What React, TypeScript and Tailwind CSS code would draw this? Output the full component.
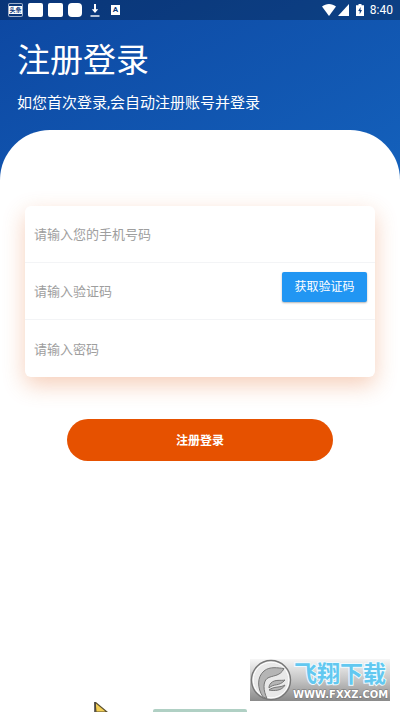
import type { ReactNode } from "react";

type FieldProps = {
  id: string;
  label: string;
  type?: string;
  children?: ReactNode;
};

function Field({ id, label, type = "text", children }: FieldProps) {
  return (
    <div className="flex h-[57px] items-start">
      <input
        id={id}
        type={type}
        aria-label={label}
        placeholder={label}
        className="h-full min-w-0 flex-1 bg-transparent px-[9px] pt-px text-[13px] text-gray-800 outline-none placeholder:text-[#9e9e9e]"
      />
      {children}
    </div>
  );
}

function StatusBar() {
  return (
    <div className="flex h-5 items-center justify-between bg-black/25 pr-[7px] pl-2 text-white">
      <div className="flex items-center gap-[5px]">
        <span className="flex h-[14px] w-[15px] items-center justify-center rounded-xs border border-white/60 bg-[#0a3678]">
          <span className="w-full bg-white text-center text-[6px] leading-[8px] font-bold whitespace-nowrap text-[#0a3678]">
            头条
          </span>
        </span>
        <span className="h-[14px] w-[15px] rounded-xs bg-white" />
        <span className="h-[14px] w-[15px] rounded-xs bg-white" />
        <span className="h-[14px] w-[14px] rounded-sm bg-white" />
        <svg viewBox="0 0 10 13" className="ml-[3px] h-[13px] w-[10px]" fill="none" stroke="currentColor">
          <path d="M5 0v8" strokeWidth="2" />
          <path d="M1.8 5.2h6.4L5 9z" fill="currentColor" stroke="none" />
          <path d="M0.5 12h9" strokeWidth="1.4" />
        </svg>
        <span className="ml-[6px] flex h-[10px] w-[9px] items-center justify-center bg-white text-[8px] leading-[10px] font-bold text-[#0a3678]">
          A
        </span>
      </div>
      <div className="flex items-center">
        <svg viewBox="0 0 14 12" className="h-3 w-[14px]" fill="currentColor">
          <path d="M0 2.6C4-.8 10-.8 14 2.6L7 12z" />
        </svg>
        <svg viewBox="0 0 11 12" className="ml-[2px] h-3 w-[11px]" fill="currentColor">
          <path d="M11 0v12H0z" />
        </svg>
        <svg viewBox="0 0 8 12" className="ml-[7px] h-3 w-2">
          <path d="M2.5 0h3v1.2H8V12H0V1.2h2.5z" fill="currentColor" />
          <path d="M4.6 3 2.2 7h1.5v3.2L6 6H4.5z" fill="#0b3a80" />
        </svg>
        <span className="ml-[6px] text-[12px] leading-5">8:40</span>
      </div>
    </div>
  );
}

function Watermark() {
  return (
    <div className="absolute right-[10px] bottom-[11px] flex h-[42px] w-[140px] items-center bg-linear-to-b from-[#f6f6f6] via-[#c4c4c4] to-[#8a8a8a]">
      <svg viewBox="0 0 42 42" className="h-[42px] w-[42px] shrink-0">
        <circle cx="21" cy="21" r="19.5" fill="#e9e9e9" stroke="#777" strokeWidth="1.4" />
        <circle cx="21" cy="21" r="17.8" fill="none" stroke="#fff" strokeWidth="1" />
        <path
          d="M34 9.5C28 9 20 7 14 12 7 18 7 29 13 38l4 1.500C13 31 13 23 17 19.500 22 16 30 18 34 9.500z"
          fill="#b5b5b5"
          stroke="#777"
          strokeWidth="1"
        />
        <path
          d="M35 21c-4 1-10-1-14 3-2 2-2 4-2 5 5-5 10-1 16-8z M35 26c-5 3-11 1-16 5 5 1 13 1 16-5z"
          fill="#b5b5b5"
          stroke="#777"
          strokeWidth="1"
        />
      </svg>
      <div className="flex flex-col pt-px whitespace-nowrap">
        <span className="pl-[2px] text-[23px] leading-[27px] font-bold text-[#62c8f0] [paint-order:stroke_fill] [-webkit-text-stroke:2px_#eefaff]">
          飞翔下载
        </span>
        <span className="pl-px font-['DejaVu_Sans'] text-[10px] leading-[13px] font-bold text-white [paint-order:stroke_fill] [-webkit-text-stroke:1px_#777]">
          WWW.FXXZ.COM
        </span>
      </div>
    </div>
  );
}

export default function App() {
  return (
    <div className="relative flex min-h-screen flex-col overflow-hidden bg-[linear-gradient(151deg,#0d47a1,#1565c0,#42a5f5)] font-[Roboto,'Noto_Sans_CJK_SC',sans-serif]">
      <StatusBar />
      <header className="px-[17px] pt-[17px] pb-[15px] text-white">
        <h1 className="text-[33px] leading-[48px]">注册登录</h1>
        <p className="mt-[7px] text-[15px] leading-[23px]">
          如您首次登录,会自动注册账号并登录
        </p>
      </header>
      <main className="flex-1 rounded-t-[50px] bg-white px-[25px] pt-[76px]">
        <form onSubmit={(e) => e.preventDefault()}>
          <div className="divide-y divide-gray-100 rounded-md bg-white shadow-[0_8px_22px_rgba(225,95,27,0.3)]">
            <Field id="phone" label="请输入您的手机号码" type="tel" />
            <Field id="code" label="请输入验证码">
              <button
                type="button"
                className="mt-[9px] mr-2 h-[30px] w-[85px] rounded-xs bg-[#2196f3] text-[12px] text-white shadow-[0_1px_2px_rgba(0,0,0,0.3)]"
              >
                获取验证码
              </button>
            </Field>
            <Field id="password" label="请输入密码" type="password" />
          </div>
          <div className="mt-[42px] px-[42px]">
            <button
              type="submit"
              className="h-[42px] w-full rounded-full bg-[#e65100] pt-px text-[12px] font-bold text-white"
            >
              注册登录
            </button>
          </div>
        </form>
      </main>

      <svg viewBox="0 0 14 10" className="absolute bottom-0 left-[94px] h-[10px] w-[14px]">
        <path d="M1 0 13 10H2z" fill="#f3cf55" stroke="#5c5130" strokeWidth="1.2" />
        <path d="M1 0v10" stroke="#4a4640" strokeWidth="1.6" />
      </svg>
      <div className="absolute bottom-0 left-[153px] h-[3px] w-[94px] rounded-t-xs bg-[#b0d0c4]" />
      <Watermark />
    </div>
  );
}
